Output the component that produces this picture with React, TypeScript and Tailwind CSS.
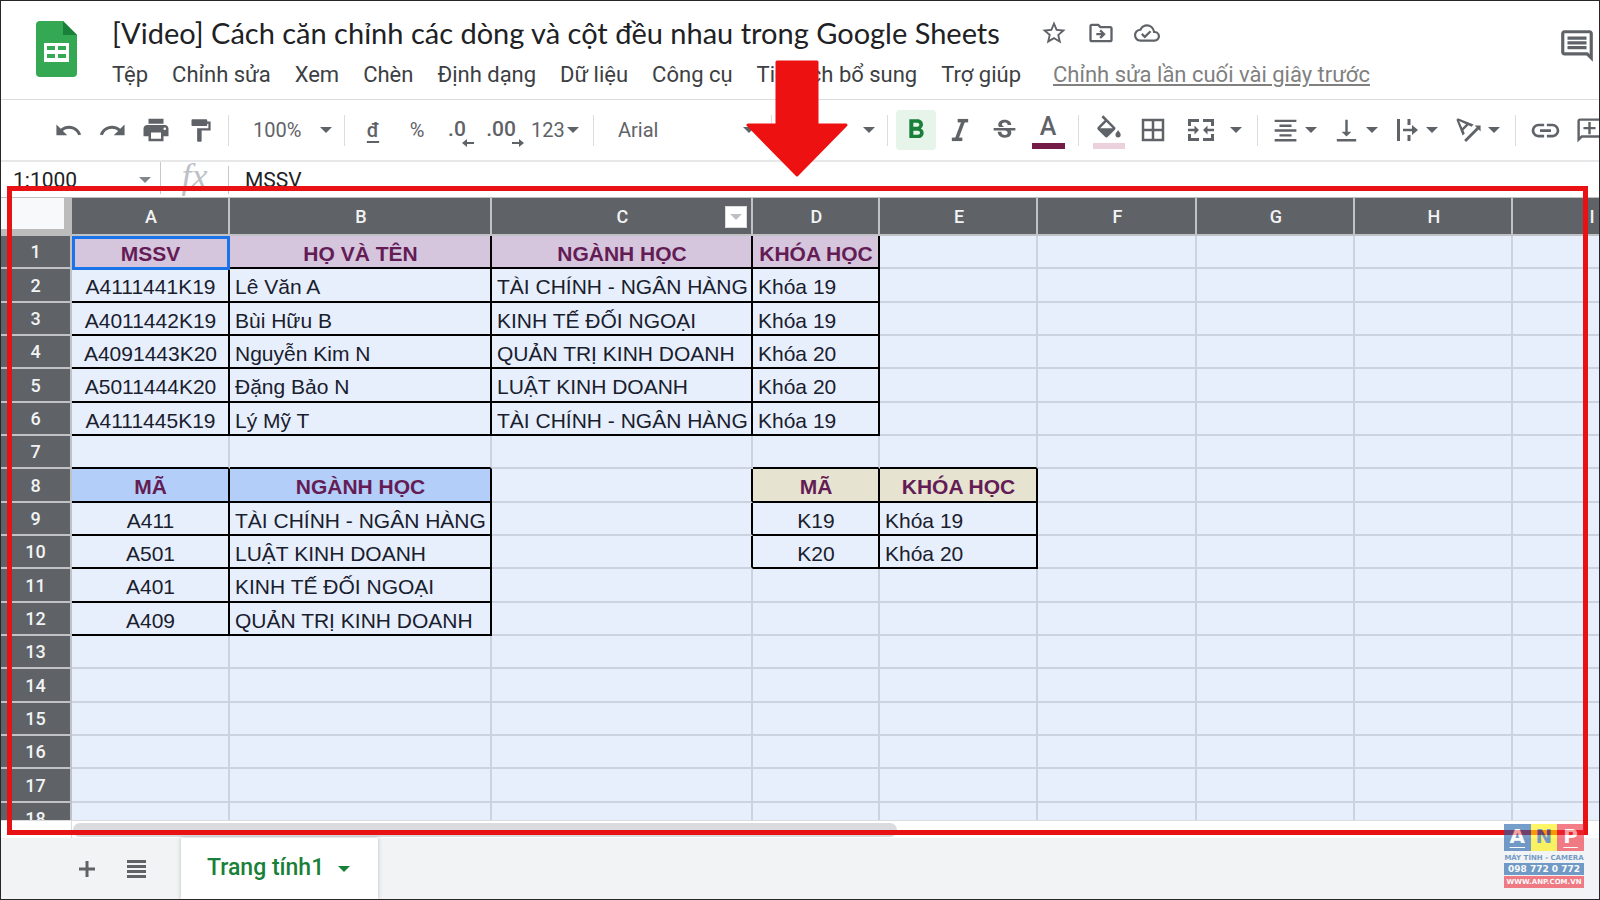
import type { ReactNode } from 'react';
import { clsx } from 'clsx';
import { Italic } from 'lucide-react';
import {
  MdUndo,
  MdRedo,
  MdPrint,
  MdFormatPaint,
  MdFormatBold,
  MdStrikethroughS,
  MdBorderAll,
  MdFormatAlignCenter,
  MdVerticalAlignBottom,
  MdLink,
  MdOutlineAddComment,
  MdStarBorder,
  MdOutlineDriveFileMove,
  MdOutlineCloudDone,
  MdOutlineInsertComment,
} from 'react-icons/md';

const menus = ['Tệp', 'Chỉnh sửa', 'Xem', 'Chèn', 'Định dạng', 'Dữ liệu', 'Công cụ', 'Tiện ích bổ sung', 'Trợ giúp'];

const columns = [
  { id: 'A', width: 'w-[158px]' },
  { id: 'B', width: 'w-[262px]' },
  { id: 'C', width: 'w-[261px]' },
  { id: 'D', width: 'w-[127px]' },
  { id: 'E', width: 'w-[158px]' },
  { id: 'F', width: 'w-[159px]' },
  { id: 'G', width: 'w-[158px]' },
  { id: 'H', width: 'w-[158px]' },
  { id: 'I', width: 'w-[158px]' },
];

const rows: Record<number, string[]> = {
  1: ['MSSV', 'HỌ VÀ TÊN', 'NGÀNH HỌC', 'KHÓA HỌC'],
  2: ['A4111441K19', 'Lê Văn A', 'TÀI CHÍNH - NGÂN HÀNG', 'Khóa 19'],
  3: ['A4011442K19', 'Bùi Hữu B', 'KINH TẾ ĐỐI NGOẠI', 'Khóa 19'],
  4: ['A4091443K20', 'Nguyễn Kim N', 'QUẢN TRỊ KINH DOANH', 'Khóa 20'],
  5: ['A5011444K20', 'Đặng Bảo N', 'LUẬT KINH DOANH', 'Khóa 20'],
  6: ['A4111445K19', 'Lý Mỹ T', 'TÀI CHÍNH - NGÂN HÀNG', 'Khóa 19'],
  8: ['MÃ', 'NGÀNH HỌC', '', 'MÃ', 'KHÓA HỌC'],
  9: ['A411', 'TÀI CHÍNH - NGÂN HÀNG', '', 'K19', 'Khóa 19'],
  10: ['A501', 'LUẬT KINH DOANH', '', 'K20', 'Khóa 20'],
  11: ['A401', 'KINH TẾ ĐỐI NGOẠI'],
  12: ['A409', 'QUẢN TRỊ KINH DOANH'],
};

const rowNumbers = Array.from({ length: 18 }, (_, i) => i + 1);

// Bordered ranges: A1:D6, A8:B12 and D8:E10
function inTable(row: number, col: number) {
  return (
    (row >= 1 && row <= 6 && col >= 0 && col <= 3) ||
    (row >= 8 && row <= 12 && col >= 0 && col <= 1) ||
    (row >= 8 && row <= 10 && (col === 3 || col === 4))
  );
}

function cellClass(row: number, col: number) {
  const heading = (row === 1 || row === 8) && inTable(row, col);
  const centered = heading || col === 0 || (row >= 8 && col === 3);
  return clsx(
    'overflow-hidden whitespace-nowrap border-r-2 border-b-2 p-0 pt-1 leading-[26px]',
    inTable(row, col) || inTable(row, col + 1) ? 'border-r-black' : 'border-r-[#cbd3e1]',
    inTable(row, col) || inTable(row + 1, col) ? 'border-b-black' : 'border-b-[#cbd3e1]',
    centered ? 'pl-px text-center' : 'pl-[5px] text-left',
    heading ? 'font-bold text-[#641c55]' : 'text-[#18202e]',
    heading && row === 1 && 'bg-[#d5c5dd]',
    heading && row === 8 && col <= 1 && 'bg-[#b3cef8]',
    heading && row === 8 && col >= 3 && 'bg-[#e7e3d1]',
  );
}

function Caret({ className }: { className?: string }) {
  return (
    <svg viewBox="0 0 12 6" className={clsx('h-[6px] w-3 shrink-0 fill-current', className)} aria-hidden="true">
      <path d="M0 0h12L6 6z" />
    </svg>
  );
}

function Separator() {
  return <div className="h-[31px] w-px shrink-0 bg-[#dadce0]" />;
}

function Tool({ label, children }: { label: string; children: ReactNode }) {
  return (
    <button aria-label={label} className="flex h-10 w-11 shrink-0 items-center justify-center">
      {children}
    </button>
  );
}

function DropTool({ label, children }: { label: string; children: ReactNode }) {
  return (
    <button aria-label={label} className="flex h-10 w-[61px] shrink-0 items-center gap-[5px] pl-1">
      {children}
      <Caret />
    </button>
  );
}

function SheetsLogo() {
  return (
    <svg viewBox="0 0 41 56" className="h-14 w-[41px] shrink-0" aria-hidden="true">
      <path d="M4 0h23l14 14v38a4 4 0 0 1-4 4H4a4 4 0 0 1-4-4V4a4 4 0 0 1 4-4z" fill="#34a853" />
      <path d="M27 0l14 14H27z" fill="#188038" />
      <path
        d="M8 22h25v19H8zM11 25v4h8v-4zM22 25v4h8v-4zM11 33v4h8v-4zM22 33v4h8v-4z"
        fill="#fff"
        fillRule="evenodd"
      />
    </svg>
  );
}

function MergeIcon() {
  return (
    <svg viewBox="0 0 26 22" className="h-[22px] w-[26px]" fill="none" stroke="currentColor" strokeWidth="3" aria-hidden="true">
      <path d="M1.500 7V1.500H11M15 1.500h9.500V7M1.500 15v5.500H11M15 20.500h9.500V15" />
      <path d="M0 11h8M18 11h8" strokeWidth="2.500" />
      <path d="M6.500 6.500 11 11l-4.500 4.500zM19.500 6.500 15 11l4.500 4.500z" fill="currentColor" stroke="none" />
    </svg>
  );
}

function WrapIcon() {
  return (
    <svg viewBox="0 0 28 24" className="h-6 w-7" fill="none" stroke="currentColor" strokeWidth="3" aria-hidden="true">
      <path d="M5.500 1v22M16 1v6M16 17v6" />
      <path d="M10 12h10" strokeWidth="2.500" />
      <path d="M19 7l6 5-6 5z" fill="currentColor" stroke="none" />
    </svg>
  );
}

function RotateIcon() {
  return (
    <svg viewBox="3 4 18 17" className="h-6 w-[29px] fill-current" aria-hidden="true">
      <path d="M4.490 4.210 3.430 5.270 7.850 16.400l1.480-1.480-.920-2.190 3.540-3.540 2.190.920 1.480-1.480L4.490 4.210zm3.090 6.800L5.360 6.140l4.870 2.230-2.650 2.640zm12.990-1.680h-4.240l1.410 1.410-8.840 8.840L10.320 21l8.840-8.840 1.410 1.410V9.330z" />
    </svg>
  );
}

function DecimalIcon({ text, direction }: { text: string; direction: 'left' | 'right' }) {
  return (
    <span className="relative pr-2 pb-[2px] text-[21px] font-medium leading-6">
      {text}
      <svg viewBox="0 0 12 8" className="absolute right-0 -bottom-1 h-2 w-3 fill-current" aria-hidden="true">
        {direction === 'left' ? <path d="M5 0v3h7v2H5v3L0 4z" /> : <path d="M7 0v3H0v2h7v3l5-4z" />}
      </svg>
    </span>
  );
}

function Toolbar() {
  return (
    <div className="flex h-[62px] shrink-0 items-center overflow-hidden border-b-2 border-[#e6e7e8] pl-[45px] text-xl text-[#5f6368]">
      <Tool label="Hoàn tác"><MdUndo size={29} /></Tool>
      <Tool label="Làm lại"><MdRedo size={29} /></Tool>
      <Tool label="In"><MdPrint size={30} /></Tool>
      <Tool label="Sao chép định dạng"><MdFormatPaint size={27} /></Tool>
      <div className="w-[6px] shrink-0" />
      <Separator />
      <div className="relative flex w-[115px] shrink-0 items-center">
        <select aria-label="Thu phóng" className="w-full appearance-none bg-transparent pl-6 outline-none">
          <option>100%</option>
        </select>
        <Caret className="pointer-events-none absolute right-3" />
      </div>
      <Separator />
      <div className="w-[6px] shrink-0" />
      <Tool label="Định dạng tiền tệ"><span className="font-medium underline underline-offset-4">đ</span></Tool>
      <Tool label="Định dạng phần trăm">%</Tool>
      <Tool label="Giảm số thập phân"><DecimalIcon text=".0" direction="left" /></Tool>
      <Tool label="Tăng số thập phân"><DecimalIcon text=".00" direction="right" /></Tool>
      <button className="flex h-10 w-[66px] shrink-0 items-center gap-[2px] pl-1">
        123
        <Caret />
      </button>
      <Separator />
      <div className="relative flex w-[177px] shrink-0 items-center">
        <select aria-label="Phông chữ" className="w-full appearance-none bg-transparent pl-6 outline-none">
          <option>Arial</option>
        </select>
        <Caret className="pointer-events-none absolute right-4" />
      </div>
      <Separator />
      <div className="relative flex w-[115px] shrink-0 items-center">
        <select aria-label="Cỡ chữ" className="w-full appearance-none bg-transparent pl-6 outline-none">
          <option>10</option>
        </select>
        <Caret className="pointer-events-none absolute right-3" />
      </div>
      <Separator />
      <button aria-label="In đậm" aria-pressed="true" className="mr-[2px] ml-2 flex size-10 shrink-0 items-center justify-center rounded-sm bg-[#e6f4ea] text-[#188038]">
        <MdFormatBold size={32} />
      </button>
      <Tool label="In nghiêng"><Italic size={28} strokeWidth={3} strokeLinecap="butt" /></Tool>
      <Tool label="Gạch ngang"><MdStrikethroughS size={29} /></Tool>
      <Tool label="Màu văn bản">
        <span className="flex flex-col items-center gap-1 pt-1">
          <span className="text-[25px] font-medium leading-6">A</span>
          <span className="h-[6px] w-[33px] bg-[#741b47]" />
        </span>
      </Tool>
      <div className="w-2 shrink-0" />
      <Separator />
      <div className="w-2 shrink-0" />
      <Tool label="Màu nền">
        <span className="flex flex-col items-center gap-1 pt-1">
          <svg viewBox="2 0 20 18" className="h-6 w-[26px] fill-current" aria-hidden="true">
            <path d="M16.560 8.940 7.620 0 6.210 1.410l2.380 2.380-5.150 5.150c-.590.590-.590 1.540 0 2.120l5.500 5.500c.290.290.680.440 1.060.440s.770-.150 1.060-.440l5.500-5.500c.590-.580.590-1.530 0-2.120zM5.210 10 10 5.210 14.790 10zM19 11.500s-2 2.170-2 3.500a2 2 0 0 0 4 0c0-1.330-2-3.500-2-3.500z" />
          </svg>
          <span className="h-[6px] w-8 bg-[#ead1dc]" />
        </span>
      </Tool>
      <Tool label="Đường viền"><MdBorderAll size={30} /></Tool>
      <div className="w-[9px] shrink-0" />
      <button aria-label="Hợp nhất ô" className="flex h-10 w-[73px] shrink-0 items-center gap-4 pl-1">
        <MergeIcon />
        <Caret />
      </button>
      <Separator />
      <div className="w-[9px] shrink-0" />
      <DropTool label="Căn ngang"><MdFormatAlignCenter size={29} /></DropTool>
      <DropTool label="Căn dọc"><MdVerticalAlignBottom size={29} /></DropTool>
      <DropTool label="Xuống dòng"><WrapIcon /></DropTool>
      <DropTool label="Xoay văn bản"><RotateIcon /></DropTool>
      <div className="w-1 shrink-0" />
      <Separator />
      <div className="w-[7px] shrink-0" />
      <Tool label="Chèn đường liên kết"><MdLink size={33} /></Tool>
      <Tool label="Chèn nhận xét"><MdOutlineAddComment size={29} className="-scale-x-100" /></Tool>
    </div>
  );
}

function FormulaBar() {
  return (
    <div className="flex h-9 shrink-0 items-start border-b border-[#c0c0c0] text-[21px] text-[#202124]">
      <div className="relative flex w-[159px] shrink-0 items-center">
        <input aria-label="Hộp tên" defaultValue="1:1000" className="h-9 w-full bg-transparent pl-3 outline-none" />
        <Caret className="absolute right-[9px] text-[#80868b]" />
      </div>
      <div className="h-8 w-px shrink-0 bg-[#c6c8ca]" />
      <span className="w-[67px] shrink-0 text-center font-['Liberation_Serif',serif] text-4xl italic leading-7 text-[#bdc1c6]">fx</span>
      <div className="mt-1 h-7 w-px shrink-0 bg-[#c6c8ca]" />
      <input aria-label="Thanh công thức" defaultValue="MSSV" className="h-9 min-w-0 flex-1 bg-transparent pl-4 outline-none" />
    </div>
  );
}

function Grid() {
  return (
    <div className="min-h-0 flex-1 overflow-hidden bg-[#e8effc]">
      <table className="w-[1670px] table-fixed border-separate border-spacing-0 font-['Liberation_Sans',sans-serif] text-[21px]">
        <colgroup>
          <col className="w-[71px]" />
          {columns.map((c) => <col key={c.id} className={c.width} />)}
        </colgroup>
        <thead className="font-['Roboto',sans-serif] text-lg text-[#f1f3f4]">
          <tr className="h-[38px]">
            <th aria-label="Chọn tất cả" className="border-r-8 border-b-[7px] border-[#bcbcbc] bg-[#f8f9fa] p-0" />
            {columns.map((c) => (
              <th key={c.id} scope="col" className="relative border-r-2 border-b-2 border-[#c0c2c5] bg-[#5f6266] p-0 pt-[2px] pl-[2px] font-medium leading-6">
                {c.id}
                {c.id === 'C' && (
                  <button aria-label="Menu cột" className="absolute top-2 right-1 flex size-[22px] items-center justify-center border border-[#dadce0] bg-white text-[#bdc1c6]">
                    <Caret />
                  </button>
                )}
              </th>
            ))}
          </tr>
        </thead>
        <tbody>
          {rowNumbers.map((row) => (
            <tr key={row} className={row % 3 === 2 ? 'h-[34px]' : 'h-[33px]'}>
              <th scope="row" className="border-r-2 border-b-2 border-[#c0c2c5] bg-[#5f6266] p-0 pt-px font-['Roboto',sans-serif] text-lg font-medium leading-6 text-[#f1f3f4]">
                {row}
              </th>
              {columns.map((c, col) => (
                <td key={c.id} className={cellClass(row, col)}>
                  {rows[row]?.[col]}
                </td>
              ))}
            </tr>
          ))}
        </tbody>
      </table>
    </div>
  );
}

function Watermark() {
  return (
    <div className="absolute right-[15px] bottom-[11px] w-20 font-['DejaVu_Sans',sans-serif] font-bold opacity-60">
      <div className="grid h-[27px] grid-cols-3 text-center text-xl leading-[25px]">
        <span className="bg-[#1c5fa8] text-white underline decoration-1 underline-offset-4">A</span>
        <span className="bg-[#fff000] text-[#1c5fa8]">N</span>
        <span className="bg-[#ee2a3a] text-white underline decoration-1 underline-offset-4">P</span>
      </div>
      <p className="mt-[2px] whitespace-nowrap text-center text-[7px] leading-[10px] text-[#1c5fa8]">MÁY TÍNH - CAMERA</p>
      <p className="h-3 whitespace-nowrap bg-[#1c5fa8] text-center text-[9px] leading-3 text-white">098 772 0 772</p>
      <p className="mt-px h-3 whitespace-nowrap bg-[#ee2a3a] text-center text-[7px] leading-3 text-white">WWW.ANP.COM.VN</p>
    </div>
  );
}

export default function App() {
  return (
    <div className="relative flex h-screen flex-col overflow-hidden border border-[#28262b] bg-white font-['Roboto',sans-serif]">
      {/* Title and menus */}
      <header className="flex h-[99px] shrink-0 items-start border-b border-[#dadce0] pl-[35px] pr-[3px]">
        <div className="pt-5"><SheetsLogo /></div>
        <div className="min-w-0 flex-1 pt-3 pl-[35px]">
          <div className="flex items-center text-[#5f6368]">
            <h1 className="mr-10 whitespace-nowrap font-['Lato',sans-serif] text-[29px] leading-10 text-[#202124]">
              [Video] Cách căn chỉnh các dòng và cột đều nhau trong Google Sheets
            </h1>
            <div className="flex items-center gap-[19px]">
              <button aria-label="Gắn dấu sao"><MdStarBorder size={28} /></button>
              <button aria-label="Di chuyển"><MdOutlineDriveFileMove size={28} /></button>
              <button aria-label="Trạng thái tài liệu"><MdOutlineCloudDone size={26} /></button>
            </div>
          </div>
          <nav className="flex items-center gap-6 whitespace-nowrap pt-[2px] text-[22px] leading-10 text-[#3c4043]">
            {menus.map((m) => <button key={m}>{m}</button>)}
            <a href="#history" className="ml-2 text-[#80807f] underline underline-offset-2">Chỉnh sửa lần cuối vài giây trước</a>
          </nav>
        </div>
        <button aria-label="Nhận xét" className="pt-[26px] text-[#5f6368]"><MdOutlineInsertComment size={38} /></button>
      </header>

      <Toolbar />
      <FormulaBar />
      <Grid />

      {/* Horizontal scrollbar */}
      <div className="flex h-[18px] shrink-0 border-t border-[#dadce0] pl-[70px]">
        <div className="w-full border-l border-[#dadce0] pt-[2px] pl-px">
          <div className="h-[14px] w-[54%] rounded-full bg-[#dadbdf]" />
        </div>
      </div>

      <footer className="flex h-[61px] shrink-0 items-stretch bg-[#f1f3f4] pl-[78px] text-[#5f6368]">
        <button aria-label="Thêm trang tính">
          <svg viewBox="0 0 16 16" className="size-4" stroke="currentColor" strokeWidth="3" aria-hidden="true">
            <path d="M8 0v16M0 8h16" />
          </svg>
        </button>
        <button aria-label="Tất cả trang tính" className="ml-8">
          <svg viewBox="0 0 19 18" className="h-[18px] w-[19px] fill-current" aria-hidden="true">
            <path d="M0 0h19v3H0zM0 5h19v3H0zM0 10h19v3H0zM0 15h19v3H0z" />
          </svg>
        </button>
        <button className="ml-[35px] flex w-[197px] items-center gap-[14px] bg-white pl-[26px] text-[23px] font-medium text-[#188038] shadow-[0_0_4px_rgba(60,64,67,0.3)]">
          Trang tính1
          <Caret />
        </button>
      </footer>

      {/* Active cell */}
      <div className="pointer-events-none absolute top-[235px] left-[71px] h-[34px] w-[158px] border-[3px] border-[#1a73e8]" />

      {/* Callout frame and arrow */}
      <div className="pointer-events-none absolute top-[185px] right-[11px] bottom-16 left-[6px] border-[5px] border-[#e81214]" />
      <svg viewBox="0 0 102 117" className="pointer-events-none absolute top-[59px] left-[745px] h-[117px] w-[102px]" aria-hidden="true">
        <path d="M31 2h40v63h29L51 115 2 65h29z" fill="#ee1111" stroke="#ee1111" strokeWidth="3" strokeLinejoin="round" />
      </svg>
      <Watermark />
    </div>
  );
}
